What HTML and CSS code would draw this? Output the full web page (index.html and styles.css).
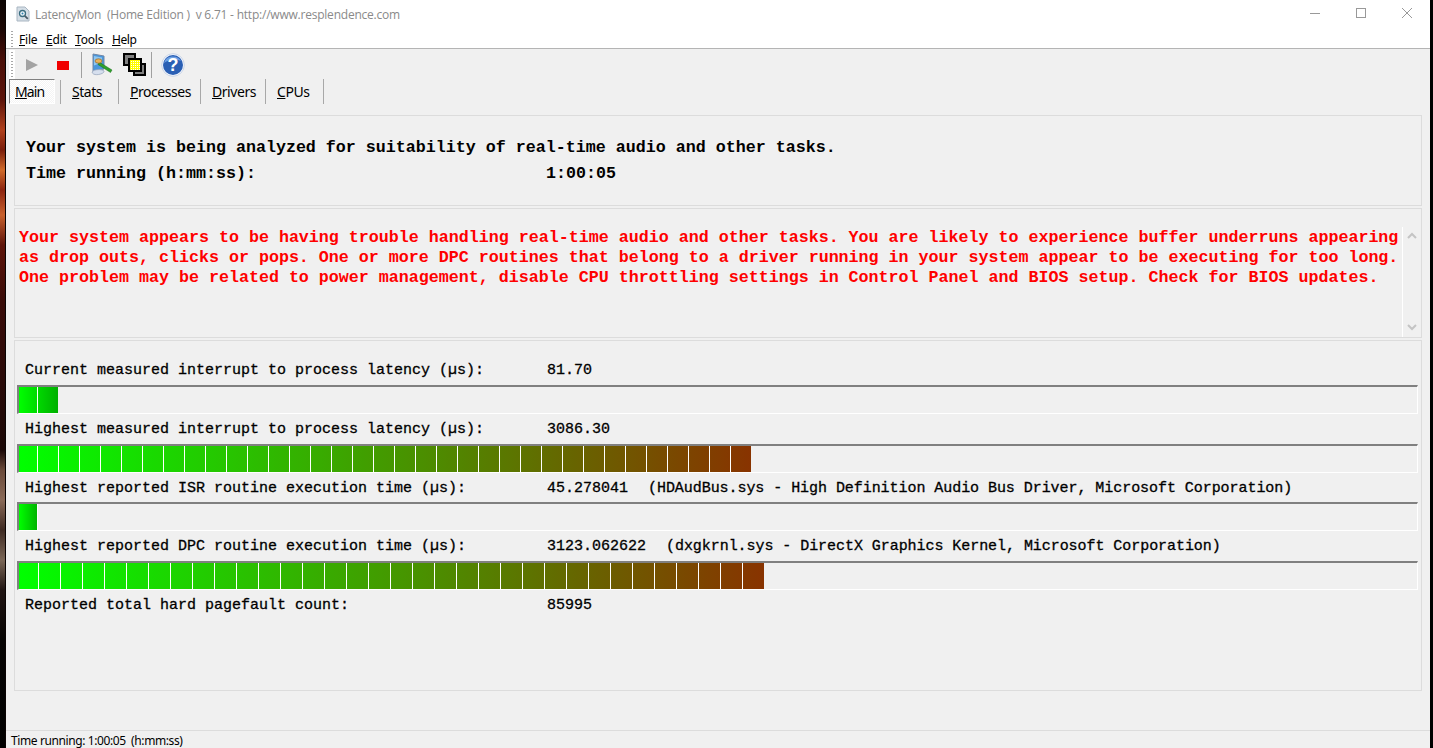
FILE: index.html
```html
<!DOCTYPE html>
<html lang="en">
<head>
<meta charset="utf-8">
<title>LatencyMon</title>
<link rel="stylesheet" href="styles.css">
</head>
<body>
<div class="desktop">
  <div class="wallpaper"></div>
  <div class="window">
    <header class="titlebar">
      <svg class="appicon" width="16" height="16" viewBox="0 0 16 16"><path d="M2 1h8l4 4v10H2z" fill="#d5dee6" stroke="#a9b6c2"/><circle cx="7.500" cy="7.500" r="3" fill="#f4f8fb" stroke="#3a6d80" stroke-width="1.300"/><circle cx="7.500" cy="7.500" r="1" fill="#2b7fb0"/><path d="M9.800 9.800l3 3" stroke="#4b5a66" stroke-width="1.800"/></svg>
      <span class="title">LatencyMon&nbsp; (Home Edition )&nbsp; v 6.71 - http://www.resplendence.com</span>
      <div class="controls">
        <svg width="12" height="12" viewBox="0 0 12 12"><path d="M1 6.500h10" stroke="#999"/></svg>
        <svg width="12" height="12" viewBox="0 0 12 12"><rect x="1.500" y="1.500" width="9" height="9" fill="none" stroke="#999"/></svg>
        <svg width="12" height="12" viewBox="0 0 12 12"><path d="M1 1l10 10M11 1L1 11" stroke="#999"/></svg>
      </div>
    </header>
    <nav class="menubar">
      <span class="grip"></span>
      <span class="menu m-file"><u>F</u>ile</span>
      <span class="menu m-edit"><u>E</u>dit</span>
      <span class="menu m-tools"><u>T</u>ools</span>
      <span class="menu m-help"><u>H</u>elp</span>
    </nav>
    <div class="toolbar">
      <span class="grip grip-tool"></span>
      <svg class="tool tool-play" width="12" height="12" viewBox="0 0 12 12"><path d="M0 0l12 6-12 6z" fill="#a3a3a3"/></svg>
      <svg class="tool tool-stop" width="12" height="9" viewBox="0 0 12 9"><rect width="12" height="9" fill="#f00000"/></svg>
      <span class="tsep"></span>
      <svg class="tool tool-mon" width="24" height="24" viewBox="0 0 24 24"><path d="M3 1l11 2v13l-11 2z" fill="#4a97dc" stroke="#6f86a6"/><path d="M4 3l8 1.500v5l-8 3z" fill="#8fc6f0"/><path d="M2 19c2-3 10-3 12-1 1 3-11 6-12 1z" fill="#d6dfee" stroke="#8f9fb8" stroke-width=".7"/><path d="M9 9l13 8-1.500 2.500-12.500-8z" fill="#2fa12c" stroke="#1b6a1a" stroke-width=".5"/><ellipse cx="8.500" cy="8" rx="3.500" ry="2.200" fill="#e8b25a" stroke="#8a5a1c" stroke-width=".6"/></svg>
      <svg class="tool tool-win" width="23" height="23" viewBox="0 0 23 23"><defs><pattern id="dither" width="2" height="2" patternUnits="userSpaceOnUse"><rect width="2" height="2" fill="#ffff00"/><rect width="1" height="1" fill="#fff"/></pattern></defs><rect x="1" y="1" width="11" height="11" fill="#808080" stroke="#000" stroke-width="2"/><rect x="11" y="11" width="11" height="11" fill="#808080" stroke="#000" stroke-width="2"/><rect x="6" y="6" width="12" height="12" fill="url(#dither)" stroke="#000" stroke-width="2"/></svg>
      <span class="tsep tsep-b"></span>
      <svg class="tool tool-help" width="24" height="24" viewBox="0 0 24 24"><circle cx="12" cy="12" r="11.300" fill="#f4f7fc" stroke="#b8c6de" stroke-width=".7"/><circle cx="12" cy="12" r="10" fill="#2a5fb4"/><path d="M3 10a9 8 0 0 1 17-2c-4-2-12-2-17 2z" fill="#6d9fe3"/><text x="12" y="18" class="helpmark">?</text></svg>
    </div>
    <div class="tabs">
      <span class="tab tab-active"><u>M</u>ain</span>
      <span class="tab t-stats"><u>S</u>tats</span>
      <span class="tab t-proc"><u>P</u>rocesses</span>
      <span class="tab t-drv"><u>D</u>rivers</span>
      <span class="tab t-cpu"><u>C</u>PUs</span>
    </div>
    <main class="content">
      <section class="panel panel-status">
        <p class="status-line">Your system is being analyzed for suitability of real-time audio and other tasks.</p>
        <p class="status-line status-time"><span>Time running (h:mm:ss):</span><span>1:00:05</span></p>
      </section>
      <section class="panel panel-verdict">
        <div class="verdict">
          <p>Your system appears to be having trouble handling real-time audio and other tasks. You are likely to experience buffer underruns appearing</p>
          <p>as drop outs, clicks or pops. One or more DPC routines that belong to a driver running in your system appear to be executing for too long.</p>
          <p>One problem may be related to power management, disable CPU throttling settings in Control Panel and BIOS setup. Check for BIOS updates.</p>
        </div>
        <div class="scroll">
          <svg width="10" height="7" viewBox="0 0 10 7"><path d="M1 6l4-4 4 4" fill="none" stroke="#c4c4c4" stroke-width="2"/></svg>
          <svg width="10" height="7" viewBox="0 0 10 7"><path d="M1 1l4 4 4-4" fill="none" stroke="#c4c4c4" stroke-width="2"/></svg>
        </div>
      </section>
      <section class="panel panel-metrics">
        <div class="metric"><span>Current measured interrupt to process latency (µs):</span><span>81.70</span></div>
        <div class="bar"><div class="fill fill-multi p21 w39"></div></div>
        <div class="metric m-a"><span>Highest measured interrupt to process latency (µs):</span><span>3086.30</span></div>
        <div class="bar"><div class="fill fill-long p21 w732"></div></div>
        <div class="metric m-c"><span>Highest reported ISR routine execution time (µs):</span><span>45.278041<span class="source">(HDAudBus.sys - High Definition Audio Bus Driver, Microsoft Corporation)</span></span></div>
        <div class="bar"><div class="fill fill-multi p21 w19"></div></div>
        <div class="metric m-a"><span>Highest reported DPC routine execution time (µs):</span><span>3123.062622<span class="source">(dxgkrnl.sys - DirectX Graphics Kernel, Microsoft Corporation)</span></span></div>
        <div class="bar"><div class="fill fill-long p22 w745"></div></div>
        <div class="metric m-a"><span>Reported total hard pagefault count:</span><span>85995</span></div>
      </section>
    </main>
    <footer class="statusbar">Time running: 1:00:05&nbsp; (h:mm:ss)</footer>
  </div>
  <div class="edge"></div>
</div>
</body>
</html>
```

FILE: styles.css
```css
* { box-sizing: border-box; }
html, body { margin: 0; height: 100%; overflow: hidden; }
body { background: #000; font-family: "Open Sans", "Noto Sans", sans-serif; color: #000; }
p { margin: 0; }

.desktop { display: flex; width: 1433px; height: 748px; }
.wallpaper {
  width: 6px; flex: none; border-right: 1px solid #0a0403;
  background: linear-gradient(180deg, #0c0503 0, #1c0704 30px, #4a0f08 60px, #5c140a 100px, #b0401c 130px, #7a1e0c 150px, #d06a2a 170px, #8c2410 190px, #c8602c 215px, #5e140a 245px, #3a0c08 300px, #2a0a08 380px, #1a0806 450px, #6a4a3a 470px, #8a6a58 500px, #3e2a22 530px, #7a6656 560px, #201412 590px, #060403 640px, #000 748px);
}
.window { width: 1424px; flex: none; display: flex; flex-direction: column; background: #f0f0f0; }
.edge { flex: 1; background: #000; }

.titlebar { height: 29px; flex: none; background: #fff; display: flex; align-items: center; padding-left: 9px; }
.appicon { margin-top: -2px; }
.title { margin-left: 4px; margin-top: -1px; font-size: 12px; color: #8a8a8a; letter-spacing: -.22px; white-space: nowrap; }
.controls { margin-left: auto; display: flex; gap: 34px; padding-right: 17px; margin-top: -3px; }

.menubar { height: 20px; flex: none; background: #fff; border-bottom: 1px solid #b4b4b4; display: flex; align-items: center; font-size: 12px; font-family: "Noto Sans", sans-serif; padding-top: 2px; }
.grip { width: 2px; height: 17px; margin-left: 5px; margin-right: 6px; background: repeating-linear-gradient(180deg, #a8a8a8 0 1px, #fff 1px 3px); }
.menu { line-height: 16px; letter-spacing: -.2px; }
.m-file { width: 27px; }
.m-edit { width: 29px; }
.m-tools { width: 37px; }
.m-help { letter-spacing: -.4px; }

.toolbar { height: 31px; flex: none; display: flex; align-items: center; }
.grip-tool { height: 26px; margin-left: 5px; margin-right: 0; box-shadow: 0 0 0 2px #fff; }
.tool { flex: none; }
.tool-play { margin-left: 13px; }
.tool-stop { margin-left: 19px; margin-top: 1px; }
.tsep { width: 1px; height: 26px; background: #a0a0a0; margin-left: 12px; }
.tool-mon { margin-left: 8px; }
.tool-win { margin-left: 9px; margin-top: -1px; }
.tsep-b { margin-left: 5px; }
.tool-help { margin-left: 9px; }
.helpmark { font: bold 18px "Liberation Sans", sans-serif; fill: #fff; text-anchor: middle; }

.tabs { height: 26px; flex: none; display: flex; align-items: stretch; padding-left: 3px; font-family: "Noto Sans", sans-serif; font-size: 14px; letter-spacing: -.45px; margin-top: -1px; }
.tab { height: 25px; line-height: 25px; padding-left: 11px; border-right: 1px solid #a8a8a8; }
.t-stats { width: 58px; }
.t-proc { width: 82px; }
.t-drv { width: 65px; }
.t-cpu { width: 58px; }
.tab-active { width: 46px; padding: 0 0 0 5px; margin-right: 6px; border: 1px solid #fff; border-top-color: #808080; border-left-color: #808080; background: repeating-conic-gradient(#f4f4f4 0 25%, #fff 0 50%) 0 0 / 2px 2px; line-height: 24px; position: relative; letter-spacing: -.9px; }
.tab-active::after { content: ""; position: absolute; right: -7px; top: 0; height: 24px; border-right: 1px solid #a8a8a8; }

.content { flex: 1; display: flex; flex-direction: column; gap: 2px; padding: 10px 8px 0; min-height: 0; }
.panel { border: 1px solid #dcdcdc; background: #f0f0f0; flex: none; }
.panel-status { height: 91px; padding: 19px 11px 0; font: bold 16.67px/26px "Liberation Mono", monospace; }
.status-time { display: grid; grid-template-columns: 520px 1fr; }
.panel-verdict { height: 130px; display: flex; justify-content: space-between; }
.verdict { padding: 19px 0 0 4px; font: bold 16.67px/20px "Liberation Mono", monospace; color: #f00; white-space: nowrap; }
.scroll { width: 19px; margin-top: 18px; border-left: 1px solid #fff; display: flex; flex-direction: column; justify-content: space-between; align-items: center; padding: 5px 0 6px; }
.panel-metrics { height: 351px; padding: 21px 2px 0; font: 15px/18px "Liberation Mono", monospace; -webkit-text-stroke: .3px #000; }
.metric { display: grid; grid-template-columns: 522px 1fr; height: 23px; padding-left: 8px; white-space: nowrap; }
.m-a { margin-top: 7px; }
.m-c { margin-top: 7px; height: 22px; }
.source { margin-left: 20px; letter-spacing: -.055px; }
.bar { height: 29px; width: 1401px; border-top: 2px solid #808080; border-left: 2px solid #808080; border-bottom: 1px solid #fff; border-right: 1px solid #fff; }
.fill { height: 100%; }
.p21 { --w: 18px; --next: 39px; }
.p22 { --w: 19px; --next: 41px; }
.fill-multi { background: repeating-linear-gradient(90deg, #fff var(--w) calc(var(--w) + 1px), transparent calc(var(--w) + 1px) var(--next)), linear-gradient(90deg, #00ff00, #00b000); }
.fill-long { background: repeating-linear-gradient(90deg, #fff var(--w) calc(var(--w) + 1px), transparent calc(var(--w) + 1px) var(--next)), linear-gradient(90deg, #00ff00, #883300); }
.w39 { width: 39px; }
.w732 { width: 732px; }
.w19 { width: 19px; }
.w745 { width: 745px; }

.statusbar { height: 18px; flex: none; border-top: 1px solid #dcdcdc; font-family: "Noto Sans", sans-serif; font-size: 12px; line-height: 20px; padding-left: 5px; letter-spacing: -.4px; white-space: nowrap; }
```
